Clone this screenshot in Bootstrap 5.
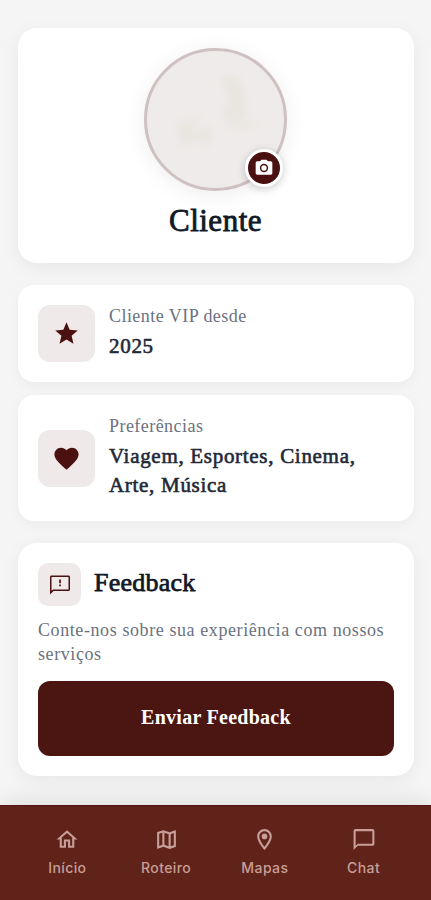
<!DOCTYPE html>
<html lang="pt-BR">
<head>
<meta charset="utf-8">
<meta name="viewport" content="width=device-width, initial-scale=1">
<title>Perfil do Cliente</title>
<link rel="stylesheet" href="https://cdn.jsdelivr.net/npm/bootstrap@5.3.0/dist/css/bootstrap.min.css">
<style>
body{background:#f5f5f5;font-family:"Liberation Serif",serif;color:#111827;height:900px;overflow:hidden}
svg{display:block;fill:currentColor}
.page-body{height:805px;padding:28px 17px 0 18px}
.panel{background:#fff;border:0;border-radius:16px;box-shadow:0 4px 14px rgba(0,0,0,.045)}
.panel-lg{border-radius:19px;box-shadow:0 5px 20px rgba(0,0,0,.06)}
.profile{height:235px;margin-bottom:22px;padding:20px 1px 0 0}
.avatar{width:143px;height:143px;border:3px solid #cfc1c1;background:#eeebea;box-shadow:0 4px 22px rgba(0,0,0,.07)}
.portrait{width:137px;height:137px;border-radius:50%}
.camera{position:absolute;right:1px;bottom:1px;width:38px;height:38px;border:3px solid #fff;background:#4b1110;color:#fff;box-shadow:0 2px 8px rgba(0,0,0,.2)}
.client-name{font-size:31px;line-height:38px;margin-top:11px;letter-spacing:.5px;-webkit-text-stroke:.8px}
.vip{height:97px;margin-bottom:13px}
.prefs{height:126px;margin-bottom:22px}
.tile{width:57px;height:57px;border-radius:12px;background:#efe9e9;color:#4b1110;flex:none}
.tile-sm{width:43px;height:43px;border-radius:10px}
.caption-text{font-size:18px;line-height:24px;color:#6b7280;letter-spacing:.45px}
.value-text{font-size:21px;line-height:29px;color:#1f2937;letter-spacing:.7px;-webkit-text-stroke:.6px}
.info-copy{margin-left:14px;padding-bottom:2px}
.feedback{height:233px;padding:20px 20px}
.feedback-title{font-size:26px;line-height:34px;margin-left:13px;padding-bottom:3px;letter-spacing:.25px;-webkit-text-stroke:.75px}
.feedback-copy{margin-top:12px;letter-spacing:.59px}
.send{height:75px;margin-top:15px;border-radius:12px;background:#4b1612;color:#fff;border:0;font-size:20px;letter-spacing:.27px;padding-bottom:9px}
.tabs{height:95px;background:#5f231a;border-top:1px solid #54150f;color:#c89f98;font:500 14px/20px Inter,sans-serif;padding:21px 18px 0;box-shadow:0 -4px 22px rgba(0,0,0,.09)}
.tabs a{color:inherit;letter-spacing:.4px}
.tabs svg{margin-bottom:6px}
</style>
<script src="https://cdn.jsdelivr.net/npm/bootstrap@5.3.0/dist/js/bootstrap.bundle.min.js"></script>
</head>
<body>
<main class="page-body">
  <section class="card panel panel-lg profile align-items-center">
    <div class="avatar rounded-circle position-relative">
      <svg class="portrait" viewBox="0 0 137 137">
        <defs><filter id="soft" x="-20%" y="-20%" width="140%" height="140%"><feGaussianBlur stdDeviation="3"/></filter></defs>
        <g filter="url(#soft)" fill="#e7e4da" opacity=".7"><path d="M74 27q18-6 22 12l4 24q-12 13-25 3l8-17zM30 73l23-6-9 14 20-5-3 22-7-11-19 8z"/><path d="M76 71l41 1-25 7z"/></g>
      </svg>
      <button class="btn camera rounded-circle p-0 d-flex align-items-center justify-content-center" aria-label="Alterar foto">
        <svg width="20" height="20" viewBox="0 0 24 24"><path fill-rule="evenodd" d="M9 2 7.17 4H4c-1.1 0-2 .9-2 2v12c0 1.1.9 2 2 2h16c1.1 0 2-.9 2-2V6c0-1.1-.9-2-2-2h-3.17L15 2zm3 15a5 5 0 1 1 0-10 5 5 0 0 1 0 10zm0-1.8a3.2 3.2 0 1 0 0-6.4 3.2 3.2 0 0 0 0 6.4z"/></svg>
      </button>
    </div>
    <h1 class="client-name mb-0">Cliente</h1>
  </section>

  <section class="card panel vip flex-row align-items-center px-3">
    <div class="tile d-flex align-items-center justify-content-center ms-1">
      <svg width="27" height="27" viewBox="0 0 24 24"><path d="M12 17.27 18.18 21l-1.64-7.03L22 9.24l-7.19-.61L12 2 9.19 8.63 2 9.24l5.46 4.73L5.82 21z"/></svg>
    </div>
    <div class="info-copy"><div class="caption-text">Cliente VIP desde</div><div class="value-text mt-1">2025</div></div>
  </section>

  <section class="card panel prefs flex-row align-items-center px-3">
    <div class="tile d-flex align-items-center justify-content-center ms-1">
      <svg width="29" height="29" viewBox="0 0 24 24"><path d="m12 21.35-1.45-1.32C5.4 15.36 2 12.28 2 8.5 2 5.42 4.42 3 7.5 3c1.74 0 3.41.81 4.5 2.09C13.09 3.81 14.76 3 16.5 3 19.58 3 22 5.42 22 8.5c0 3.78-3.4 6.86-8.55 11.54z"/></svg>
    </div>
    <div class="info-copy"><div class="caption-text">Preferências</div><div class="value-text mt-1">Viagem, Esportes, Cinema,<br>Arte, Música</div></div>
  </section>

  <section class="card panel panel-lg feedback">
    <div class="d-flex align-items-center">
      <div class="tile tile-sm d-flex align-items-center justify-content-center">
        <svg width="24" height="24" viewBox="0 0 24 24"><path d="M20.5 2.5h-17c-.8 0-1.5.7-1.5 1.5v17.5L5.5 18h15c.8 0 1.5-.7 1.5-1.5V4c0-.8-.7-1.5-1.5-1.5zm0 14H5l-1.5 1.3V4h17zM11.2 11.5h1.7v1.8h-1.7zm0-5h1.7v3.7h-1.7z"/></svg>
      </div>
      <h2 class="feedback-title mb-0">Feedback</h2>
    </div>
    <div class="caption-text feedback-copy">Conte-nos sobre sua experiência com nossos<br>serviços</div>
    <button class="btn send w-100 fw-bold">Enviar Feedback</button>
  </section>
</main>

<nav class="tabs d-flex position-relative">
  <a class="d-flex flex-column align-items-center text-decoration-none w-25" href="#"><svg width="26" height="25" viewBox="0 0 24 24"><path d="m12 5.69 5 4.5V18h-2v-6H9v6H7v-7.81zM12 3 2 12h3v8h6v-6h2v6h6v-8h3z"/></svg>Início</a>
  <a class="d-flex flex-column align-items-center text-decoration-none w-25" href="#"><svg width="27" height="25" viewBox="0 0 24 24"><path d="m20.5 3-.16.03L15 5.1 9 3 3.36 4.9c-.21.07-.36.25-.36.48V20.5c0 .28.22.5.5.5l.16-.03L9 18.9l6 2.1 5.64-1.9c.21-.07.36-.25.36-.48V3.5c0-.28-.22-.5-.5-.5zM10 5.47l4 1.4v11.66l-4-1.4zm-5 .99 3-1.01v11.7l-3 1.16zm14 11.08-3 1.01V6.86l3-1.16z"/></svg>Roteiro</a>
  <a class="d-flex flex-column align-items-center text-decoration-none w-25" href="#"><svg width="27" height="25" viewBox="0 0 24 24"><path d="M12 2C8.13 2 5 5.13 5 9c0 5.25 7 13 7 13s7-7.75 7-13c0-3.87-3.13-7-7-7zM7 9c0-2.76 2.24-5 5-5s5 2.24 5 5c0 2.88-2.88 7.19-5 9.88C9.92 16.21 7 11.85 7 9z"/><circle cx="12" cy="9" r="2.7"/></svg>Mapas</a>
  <a class="d-flex flex-column align-items-center text-decoration-none w-25" href="#"><svg width="28" height="25" viewBox="0 0 24 24"><path d="M20 2H4c-1.1 0-2 .9-2 2v18l4-4h14c1.1 0 2-.9 2-2V4c0-1.1-.9-2-2-2zm0 14H6l-2 2V4h16z"/></svg>Chat</a>
</nav>
</body>
</html>
